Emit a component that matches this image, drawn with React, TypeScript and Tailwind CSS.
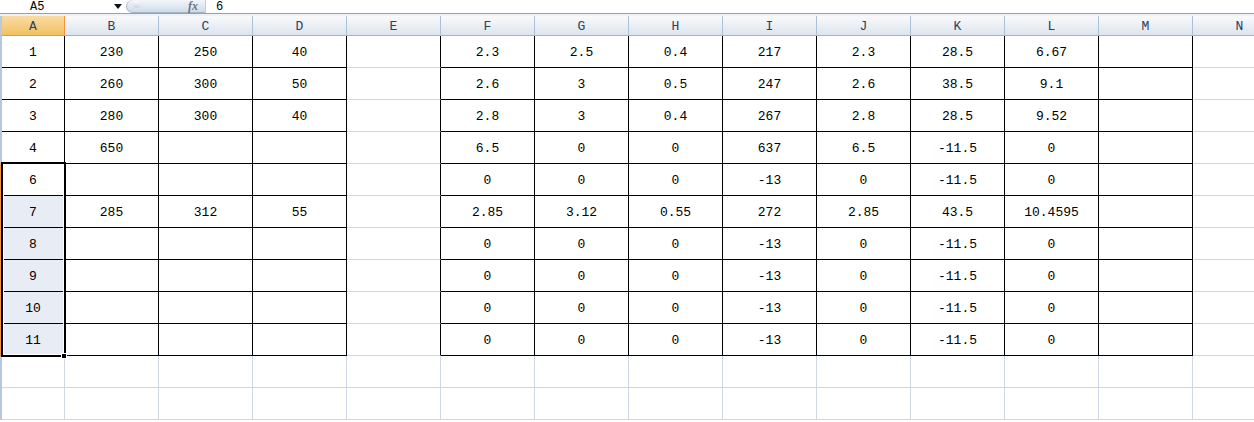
import React from 'react';

const COLS = ['A', 'B', 'C', 'D', 'E', 'F', 'G', 'H', 'I', 'J', 'K', 'L', 'M', 'N'];

// values for columns A..L, one entry per sheet row
const rows: string[][] = [
  ['1', '230', '250', '40', '', '2.3', '2.5', '0.4', '217', '2.3', '28.5', '6.67'],
  ['2', '260', '300', '50', '', '2.6', '3', '0.5', '247', '2.6', '38.5', '9.1'],
  ['3', '280', '300', '40', '', '2.8', '3', '0.4', '267', '2.8', '28.5', '9.52'],
  ['4', '650', '', '', '', '6.5', '0', '0', '637', '6.5', '-11.5', '0'],
  ['6', '', '', '', '', '0', '0', '0', '-13', '0', '-11.5', '0'],
  ['7', '285', '312', '55', '', '2.85', '3.12', '0.55', '272', '2.85', '43.5', '10.4595'],
  ['8', '', '', '', '', '0', '0', '0', '-13', '0', '-11.5', '0'],
  ['9', '', '', '', '', '0', '0', '0', '-13', '0', '-11.5', '0'],
  ['10', '', '', '', '', '0', '0', '0', '-13', '0', '-11.5', '0'],
  ['11', '', '', '', '', '0', '0', '0', '-13', '0', '-11.5', '0'],
  [],
  [],
];

const inRange = (c: number) => c <= 3 || (c >= 5 && c <= 12);

const FormulaBar = () => (
  <div className="flex h-[13px] items-center overflow-hidden bg-white text-[12px] leading-[12px] text-black">
    <div className="flex w-[126px] shrink-0 items-center">
      <span className="ml-[30px]">A5</span>
      <svg className="ml-[70px]" width="8" height="5" viewBox="0 0 8 5">
        <path d="M0 0h8L4 5z" fill="#111" />
      </svg>
    </div>
    <div className="relative flex h-[13px] w-[79px] shrink-0 items-center justify-end rounded-bl-[8px] rounded-tl-[8px] border border-r-0 border-t-0 border-[#a5b6cb] bg-gradient-to-b from-[#f3f6fb] to-[#cfdbea] pr-[7px]">
      <span className="absolute left-[6px] top-[1px] h-[7px] w-[7px] rounded-full bg-gradient-to-b from-white to-[#c9d3df]" />
      <span className="font-['Liberation_Serif',serif] text-[12px] leading-[12px] font-bold italic text-[#6b7685]">fx</span>
    </div>
    <div className="h-[13px] w-px bg-[#c3ccd8]" />
    <span className="ml-[10px]">6</span>
  </div>
);

export default function App() {
  return (
    <div className="h-[422px] w-[1254px] overflow-hidden bg-white font-['Liberation_Mono','DejaVu_Sans_Mono',monospace]">
      <FormulaBar />
      <div className="h-px bg-[#8ea2ba]" />
      <div className="h-[2px] bg-[#eef2f7]" />

      {/* column headers */}
      <div className="grid grid-cols-[2px_63px_repeat(13,94px)]">
        <div className="h-[20px] bg-[#b9c9dc]" />
        {COLS.map((c, i) => (
          <div
            key={c}
            className={
              i === 0
                ? 'flex h-[20px] items-center justify-center border-b border-r border-[#f29536] bg-gradient-to-b from-[#f9dba3] to-[#f1c15f] pt-[3px] text-[13px] text-[#27415f]'
                : 'flex h-[20px] items-center justify-center border-b border-r border-b-[#9eb6ce] border-r-[#a9c0d8] bg-gradient-to-b from-[#f9fafc] to-[#dde4ee] pt-[3px] text-[13px] text-[#27415f]'
            }
          >
            {c}
          </div>
        ))}
      </div>

      {/* cells */}
      <div className="relative grid grid-cols-[2px_63px_repeat(13,94px)]">
        {rows.map((r, ri) => {
          const dataRow = ri < 10;
          const selected = ri >= 4 && ri < 10;
          return (
            <React.Fragment key={ri}>
              <div className={selected ? 'h-8 bg-[#f29536]' : 'h-8 bg-[#b7c8dc]'} />
              {COLS.map((c, ci) => {
                const rightBlack = dataRow && (inRange(ci) || ci === 4);
                const bottomBlack = dataRow && inRange(ci);
                const bg = ci === 0 && ri >= 5 && ri < 10 ? 'bg-[#e8ecf5]' : 'bg-white';
                return (
                  <div
                    key={c}
                    className={`flex h-8 items-center justify-center border-b border-r pt-[3px] text-[13px] text-black ${bg} ${
                      rightBlack ? 'border-r-black' : 'border-r-[#d0d7e5]'
                    } ${bottomBlack ? 'border-b-black' : 'border-b-[#d0d7e5]'}`}
                  >
                    {r[ci] ?? ''}
                  </div>
                );
              })}
            </React.Fragment>
          );
        })}

        {/* selection A5:A11 */}
        <div className="pointer-events-none absolute left-[1px] top-[126px] h-[195px] w-[65px] border-2 border-black shadow-[inset_0_0_0_1px_white]" />
        <div className="absolute left-[61px] top-[317px] h-[6px] w-[6px] border border-white bg-black" />
      </div>
    </div>
  );
}
